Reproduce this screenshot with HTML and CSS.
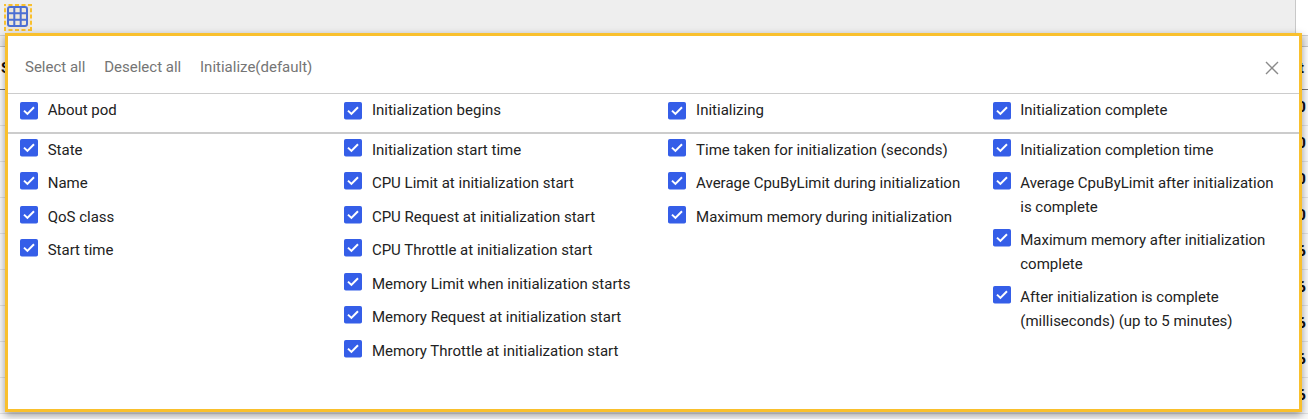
FILE: index.html
```
<!DOCTYPE html>
<html lang="en">
<head>
<meta charset="utf-8">
<title>Column settings</title>
<link rel="stylesheet" href="styles.css">
</head>
<body>
<div class="page">
  <div class="toolbar">
    <div class="toolbar-main">
      <button class="grid-button" aria-label="Columns">
        <svg width="28" height="27" viewBox="0 0 28 27" fill="none"><path d="M0 1h28M0 26h28" stroke="#f9c02d" stroke-width="2" stroke-dasharray="4 2.5" stroke-dashoffset="2"/><path d="M1 0v27M27 0v27" stroke="#f9c02d" stroke-width="2" stroke-dasharray="4 2.25" stroke-dashoffset="2"/><g stroke="#4c6fd3" stroke-width="2"><rect x="4" y="3" width="19" height="19" rx="2"/><path d="M10.3 3v19M16.7 3v19M4 9.3h19M4 15.7h19"/></g></svg>
      </button>
    </div>
    <div class="toolbar-side"></div>
  </div>
  <div class="band"></div>
  <div class="table">
    <div class="table-head"><span>S</span><span>t</span></div>
    <div class="table-row">0</div>
    <div class="table-row">0</div>
    <div class="table-row">0</div>
    <div class="table-row">0</div>
    <div class="table-row">6</div>
    <div class="table-row">6</div>
    <div class="table-row">6</div>
    <div class="table-row">6</div>
    <div class="table-row">6</div>
    <div class="table-row"></div>
  </div>
  <section class="popup">
    <header class="actions">
      <span>Select all</span><span>Deselect all</span><span>Initialize(default)</span>
      <svg class="close" width="14" height="14" viewBox="0 0 14 14" stroke="#8a8a8a" stroke-width="1.4"><path d="M1 1l12 12M13 1L1 13"/></svg>
    </header>
    <div class="columns groups"></div>
    <div class="columns items"></div>
  </section>
</div>
<script src="script.js"></script>
</body>
</html>
```

FILE: styles.css
```
* { box-sizing: border-box; }
body { margin: 0; font-family: Roboto, "Liberation Sans", sans-serif; font-size: 15px; color: #222; }
.page { position: relative; width: 1308px; height: 419px; overflow: hidden; background: #fff; }
.toolbar { display: flex; height: 35px; }
.toolbar-main { width: 1296px; padding: 4px; background: #eee; border-right: 1px solid #c8c8c8; }
.toolbar-side { flex: 1; }
.grid-button { display: block; width: 28px; height: 27px; padding: 0; border: 0; background: #eee7da; }
.grid-button svg { display: block; }
.band { height: 12px; background: #eee; border-top: 1px solid #ccc; border-bottom: 1px solid #c4c4c4; }
.table { font-weight: 700; font-size: 15.5px; color: #111; }
.table-head { display: flex; justify-content: space-between; height: 43px; padding: 0 4px 0 1px; line-height: 42px; border-bottom: 1px solid #77777d; }
.table-row { height: 36px; padding-right: 2px; line-height: 35px; text-align: right; background: #fafafa; border-bottom: 1px solid #e2e2e2; }
.popup { position: absolute; left: 5px; top: 33px; width: 1297px; height: 379px; border: 3px solid #f9c02d; background: #fff; box-shadow: 0 3px 8px rgba(0, 0, 0, .4); }
.actions { display: flex; align-items: center; gap: 18.8px; height: 58px; padding: 4px 20px 0 17px; border-bottom: 1px solid #ccc; color: #757575; }
.close { margin: 2px 0 0 auto; }
.columns { display: grid; grid-template-columns: repeat(4, 324.2px); padding-left: 12px; }
.groups { height: 40px; padding-top: 3.8px; border-bottom: 2px solid #ccc; }
.items { padding-top: 3.8px; }
.list { display: flex; flex-direction: column; gap: 9.5px; }
.list:last-child { gap: 9.1px; }
.option { display: flex; align-items: flex-start; gap: 9.7px; line-height: 24px; }
.option span { width: 266px; }
.check { flex: none; width: 18px; height: 18px; margin-top: 0.8px; }
.groups .check { margin-top: 4.2px; }
```

FILE: script.js
```
const groups = [
  ["About pod", "State", "Name", "QoS class", "Start time"],
  ["Initialization begins", "Initialization start time", "CPU Limit at initialization start", "CPU Request at initialization start", "CPU Throttle at initialization start", "Memory Limit when initialization starts", "Memory Request at initialization start", "Memory Throttle at initialization start"],
  ["Initializing", "Time taken for initialization (seconds)", "Average CpuByLimit during initialization", "Maximum memory during initialization"],
  ["Initialization complete", "Initialization completion time", "Average CpuByLimit after initialization is complete", "Maximum memory after initialization complete", "After initialization is complete (milliseconds) (up to 5 minutes)"]
];
const option = (label) => `<label class="option"><svg class="check" viewBox="0 0 18 18"><rect width="18" height="17.5" rx="1.8" fill="#355ee8"/><path d="M4 8.6l3.4 3.3L14 5.2" fill="none" stroke="#fff" stroke-width="2"/></svg><span>${label}</span></label>`;
document.querySelector(".groups").innerHTML = groups.map((g) => option(g[0])).join("");
document.querySelector(".items").innerHTML = groups.map((g) => `<div class="list">${g.slice(1).map(option).join("")}</div>`).join("");
```
